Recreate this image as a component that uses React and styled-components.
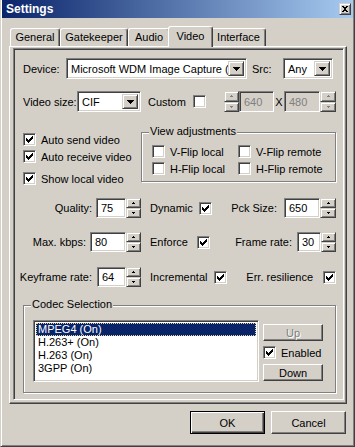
import React from 'react';
import styled, { createGlobalStyle, css } from 'styled-components';

const FACE = '#D4D0C8';
const HI = '#FFFFFF';
const SH = '#808080';
const DK = '#404040';

const GlobalStyle = createGlobalStyle`
  html, body { margin: 0; padding: 0; background: ${FACE}; }
  body { font-family: "Liberation Sans", Arial, sans-serif; font-size: 11px; color: #000; }
  * { box-sizing: border-box; }
`;

const sunken = css`
  border: 1px solid;
  border-color: ${SH} ${HI} ${HI} ${SH};
  box-shadow: inset 1px 1px ${DK}, inset -1px -1px ${FACE};
`;

const raised = css`
  border: 1px solid;
  border-color: ${FACE} ${DK} ${DK} ${FACE};
  box-shadow: inset 1px 1px ${HI}, inset -1px -1px ${SH};
`;

const Window = styled.div`
  width: 355px;
  height: 447px;
  background: ${FACE};
  border-left: 1px solid ${FACE};
  border-right: 1px solid ${DK};
  border-bottom: 1px solid ${DK};
  box-shadow: inset 1px 0 ${HI}, inset -1px -1px ${SH};
  display: flex;
  flex-direction: column;
`;

const TitleBar = styled.div`
  height: 18px;
  margin: 0 1px;
  background: linear-gradient(to right, #0A246A, #A6CAF0);
  display: flex;
  align-items: center;
  justify-content: space-between;
  padding: 0 2px 0 4px;
`;

const TitleText = styled.span`
  color: #fff;
  font-weight: bold;
  font-size: 12px;
`;

const CloseButton = styled.div`
  width: 12px;
  height: 12px;
  background: ${FACE};
  ${raised};
  display: flex;
  align-items: center;
  justify-content: center;
`;

const Body = styled.div`
  flex: 1;
  padding-left: 8px;
  display: flex;
  flex-direction: column;
`;

const TabStrip = styled.div`
  height: 28px;
  display: flex;
  align-items: flex-end;
  padding-left: 1px;
`;

const Tab = styled.div`
  position: relative;
  z-index: ${p => (p.$active ? 2 : 1)};
  width: ${p => p.$w + (p.$active ? 4 : 0)}px;
  height: ${p => (p.$active ? 21 : 18)}px;
  margin: 0 ${p => (p.$active ? -2 : 0)}px ${p => (p.$active ? -1 : 0)}px;
  background: ${FACE};
  border-top: 1px solid ${HI};
  border-left: 1px solid ${HI};
  border-right: 1px solid ${DK};
  border-radius: 3px 3px 0 0;
  box-shadow: inset -1px 0 ${SH};
  display: flex;
  align-items: center;
  justify-content: center;
  padding-bottom: ${p => (p.$active ? 3 : 1)}px;
  white-space: nowrap;
`;

const Panel = styled.div`
  width: 338px;
  height: 358px;
  border: 1px solid;
  border-color: ${HI} ${DK} ${DK} ${HI};
  box-shadow: inset -1px -1px ${SH};
  padding: 1px 0 0 3px;
`;

const Frame = styled.div`
  width: 331px;
  height: 352px;
  ${sunken};
  padding: 0 7px 0 9px;
  display: flex;
  flex-direction: column;
`;

const FieldRow = styled.div`
  display: flex;
  align-items: center;
  height: ${p => p.$h || 20}px;
  margin-top: ${p => p.$mt || 0}px;
`;

const Text = styled.span`
  display: inline-block;
  flex: none;
  white-space: nowrap;
  width: ${p => (p.$w ? `${p.$w}px` : 'auto')};
  margin-left: ${p => p.$ml || 0}px;
  margin-right: ${p => p.$mr || 0}px;
  text-align: ${p => p.$align || 'left'};
  color: ${p => (p.$disabled ? SH : '#000')};
`;

const Combo = styled.div`
  width: ${p => p.$w}px;
  height: 21px;
  flex: none;
  ${sunken};
  background: #fff;
  padding: 2px;
  display: flex;
  align-items: stretch;
`;

const ComboText = styled.div`
  flex: 1;
  min-width: 0;
  overflow: hidden;
  white-space: nowrap;
  padding-left: 2px;
  display: flex;
  align-items: center;
`;

const DropButton = styled.div`
  width: 16px;
  flex: none;
  background: ${FACE};
  ${raised};
  display: flex;
  align-items: center;
  justify-content: center;
`;

const Edit = styled.div`
  width: ${p => p.$w}px;
  height: ${p => p.$h || 20}px;
  flex: none;
  ${sunken};
  background: ${p => (p.$disabled ? FACE : '#fff')};
  color: ${p => (p.$disabled ? SH : '#000')};
  padding-left: 4px;
  display: flex;
  align-items: center;
`;

const SpinBox = styled.div`
  width: ${p => p.$w || 15}px;
  height: ${p => p.$h || 20}px;
  flex: none;
  display: flex;
  flex-direction: column;
`;

const SpinButton = styled.div`
  flex: 1;
  background: ${FACE};
  ${raised};
  display: flex;
  align-items: center;
  justify-content: center;
`;

const CheckBox = styled.span`
  width: 13px;
  height: 13px;
  flex: none;
  ${sunken};
  background: ${p => (p.$disabled ? FACE : '#fff')};
  display: inline-flex;
  align-items: center;
  justify-content: center;
`;

const CheckRow = styled.div`
  display: flex;
  align-items: center;
  height: 13px;
  margin-top: ${p => p.$mt || 0}px;
`;

const Section = styled.div`
  display: flex;
  align-items: flex-start;
  margin-top: ${p => p.$mt || 0}px;
`;

const LeftChecks = styled.div`
  width: 118px;
  flex: none;
  display: flex;
  flex-direction: column;
  padding-top: 7px;
`;

const Group = styled.div`
  position: relative;
  flex: none;
  width: ${p => p.$w}px;
  height: ${p => p.$h}px;
  margin-top: ${p => p.$mt || 0}px;
  border: 1px solid ${SH};
  box-shadow: inset 1px 1px ${HI}, 1px 1px ${HI};
`;

const Caption = styled.span`
  position: absolute;
  top: -8px;
  left: 7px;
  padding: 0 1px;
  line-height: 13px;
  background: ${FACE};
  white-space: nowrap;
`;

const FlipGrid = styled.div`
  display: grid;
  grid-template-columns: 86px auto;
  row-gap: 4px;
  padding: 12px 0 0 10px;
`;

const LeftCell = styled.div`
  width: 118px;
  flex: none;
  display: flex;
  justify-content: flex-end;
  align-items: center;
  height: 100%;
`;

const MidCell = styled.div`
  margin-left: 9px;
  display: flex;
  align-items: center;
  flex: none;
`;

const RightCell = styled.div`
  flex: 1;
  display: flex;
  justify-content: flex-end;
  align-items: center;
`;

const CodecBody = styled.div`
  display: flex;
  align-items: flex-start;
  padding: 14px 0 0 9px;
`;

const ListBox = styled.div`
  width: 226px;
  height: 62px;
  flex: none;
  ${sunken};
  background: #fff;
  padding: 2px;
`;

const ListItem = styled.div`
  height: 13px;
  line-height: 13px;
  padding-left: 2px;
  white-space: nowrap;
  background: ${p => (p.$selected ? '#0A246A' : 'transparent')};
  color: ${p => (p.$selected ? '#fff' : '#000')};
  outline: ${p => (p.$selected ? '1px dotted #E8D898' : 'none')};
  outline-offset: -1px;
`;

const SideColumn = styled.div`
  margin-left: 4px;
  margin-top: 4px;
  width: 60px;
  display: flex;
  flex-direction: column;
`;

const SmallButton = styled.div`
  width: 60px;
  height: 17px;
  margin-top: ${p => p.$mt || 0}px;
  background: ${FACE};
  border: 1px solid;
  border-color: ${HI} ${DK} ${DK} ${HI};
  box-shadow: inset -1px -1px ${SH};
  display: flex;
  align-items: center;
  justify-content: center;
  color: ${p => (p.$disabled ? SH : '#000')};
  text-shadow: ${p => (p.$disabled ? `1px 1px 0 ${HI}` : 'none')};
`;

const ButtonRow = styled.div`
  width: 338px;
  height: 23px;
  margin-top: 7px;
  padding-right: 1px;
  display: flex;
  justify-content: flex-end;
  gap: 6px;
`;

const DialogButton = styled.div`
  width: 75px;
  height: 23px;
  background: ${FACE};
  border: 1px solid;
  border-color: ${HI} ${DK} ${DK} ${HI};
  box-shadow: inset -1px -1px ${SH};
  display: flex;
  align-items: center;
  justify-content: center;
  ${p =>
    p.$default &&
    css`
      border: 1px solid #000;
      box-shadow: inset 1px 1px ${HI}, inset -1px -1px ${DK}, inset -2px -2px ${SH};
    `}
`;

const CHECK_PATH = 'M0 2h1v1h1v1h1v-1h1v-1h1v-1h1v-1h1v3h-1v1h-1v1h-1v1h-1v1h-1v-1h-1v-1h-1v-1h-1z';

function Check({ checked, disabled }) {
  return (
    <CheckBox $disabled={disabled}>
      {checked && (
        <svg width="7" height="7" viewBox="0 0 7 7" shapeRendering="crispEdges">
          <path d={CHECK_PATH} fill="#000" />
        </svg>
      )}
    </CheckBox>
  );
}

function DownArrow() {
  return (
    <svg width="7" height="4" viewBox="0 0 7 4" shapeRendering="crispEdges">
      <path d="M0 0h7v1h-1v1h-1v1h-1v1h-1v-1h-1v-1h-1v-1h-1z" fill="#000" />
    </svg>
  );
}

function Spinner({ disabled, w, h }) {
  const color = disabled ? SH : '#000';
  return (
    <SpinBox $w={w} $h={h}>
      <SpinButton>
        <svg width="3" height="2" viewBox="0 0 3 2" shapeRendering="crispEdges">
          <path d="M1 0h1v1h1v1h-3v-1h1z" fill={color} />
        </svg>
      </SpinButton>
      <SpinButton>
        <svg width="3" height="2" viewBox="0 0 3 2" shapeRendering="crispEdges">
          <path d="M0 0h3v1h-1v1h-1v-1h-1z" fill={color} />
        </svg>
      </SpinButton>
    </SpinBox>
  );
}

function ComboBox({ w, value }) {
  return (
    <Combo $w={w}>
      <ComboText>{value}</ComboText>
      <DropButton>
        <DownArrow />
      </DropButton>
    </Combo>
  );
}

export default function App() {
  return (
    <>
      <GlobalStyle />
      <Window>
        <TitleBar>
          <TitleText>Settings</TitleText>
          <CloseButton>
            <svg width="6" height="6" viewBox="0 0 6 6" shapeRendering="crispEdges">
              <path d="M0 0h2v1h2v-1h2v1h-1v1h-1v2h1v1h1v1h-2v-1h-2v1h-2v-1h1v-1h1v-2h-1v-1h-1z" fill="#000" />
            </svg>
          </CloseButton>
        </TitleBar>
        <Body>
          <TabStrip>
            <Tab $w={50}>General</Tab>
            <Tab $w={68}>Gatekeeper</Tab>
            <Tab $w={42}>Audio</Tab>
            <Tab $w={41} $active>Video</Tab>
            <Tab $w={55}>Interface</Tab>
          </TabStrip>
          <Panel>
            <Frame>
              <FieldRow $h={21} $mt={9}>
                <Text $w={43}>Device:</Text>
                <ComboBox w={181} value="Microsoft WDM Image Capture (W" />
                <Text $w={31} $ml={5}>Src:</Text>
                <ComboBox w={50} value="Any" />
              </FieldRow>

              <FieldRow $h={21} $mt={12}>
                <Text $w={54}>Video size:</Text>
                <ComboBox w={64} value="CIF" />
                <Text $w={45} $ml={7}>Custom</Text>
                <Check />
                <Text $w={18} />
                <Spinner disabled h={21} />
                <Edit $w={35} $h={21} $disabled>640</Edit>
                <Text $w={10} $align="center">X</Text>
                <Edit $w={36} $h={21} $disabled>480</Edit>
                <Spinner disabled w={16} h={21} />
              </FieldRow>

              <Section $mt={14}>
                <LeftChecks>
                  <CheckRow>
                    <Check checked />
                    <Text $ml={5}>Auto send video</Text>
                  </CheckRow>
                  <CheckRow $mt={4}>
                    <Check checked />
                    <Text $ml={5}>Auto receive video</Text>
                  </CheckRow>
                  <CheckRow $mt={9}>
                    <Check checked />
                    <Text $ml={5}>Show local video</Text>
                  </CheckRow>
                </LeftChecks>
                <Group $w={195} $h={50} $mt={6}>
                  <Caption>View adjustments</Caption>
                  <FlipGrid>
                    <CheckRow>
                      <Check />
                      <Text $ml={5}>V-Flip local</Text>
                    </CheckRow>
                    <CheckRow>
                      <Check />
                      <Text $ml={5}>V-Flip remote</Text>
                    </CheckRow>
                    <CheckRow>
                      <Check />
                      <Text $ml={5}>H-Flip local</Text>
                    </CheckRow>
                    <CheckRow>
                      <Check />
                      <Text $ml={5}>H-Flip remote</Text>
                    </CheckRow>
                  </FlipGrid>
                </Group>
              </Section>

              <FieldRow $mt={13}>
                <LeftCell>
                  <Text $mr={4}>Quality:</Text>
                  <Edit $w={30}>75</Edit>
                  <Spinner />
                </LeftCell>
                <MidCell>
                  <Text $w={49}>Dynamic</Text>
                  <Check checked />
                </MidCell>
                <RightCell>
                  <Text $mr={7}>Pck Size:</Text>
                  <Edit $w={36}>650</Edit>
                  <Spinner w={16} />
                </RightCell>
              </FieldRow>

              <FieldRow $mt={14}>
                <LeftCell>
                  <Text $mr={4}>Max. kbps:</Text>
                  <Edit $w={36}>80</Edit>
                  <Spinner />
                </LeftCell>
                <MidCell>
                  <Text $w={47}>Enforce</Text>
                  <Check checked />
                </MidCell>
                <RightCell>
                  <Text $mr={5}>Frame rate:</Text>
                  <Edit $w={24}>30</Edit>
                  <Spinner />
                </RightCell>
              </FieldRow>

              <FieldRow $mt={15}>
                <LeftCell>
                  <Text $mr={5}>Keyframe rate:</Text>
                  <Edit $w={29}>64</Edit>
                  <Spinner />
                </LeftCell>
                <MidCell>
                  <Text $w={64}>Incremental</Text>
                  <Check checked />
                </MidCell>
                <RightCell>
                  <Text $mr={10}>Err. resilience</Text>
                  <Check checked />
                </RightCell>
              </FieldRow>

              <Group $w={313} $h={88} $mt={18}>
                <Caption>Codec Selection</Caption>
                <CodecBody>
                  <ListBox>
                    <ListItem $selected>MPEG4 (On)</ListItem>
                    <ListItem>H.263+ (On)</ListItem>
                    <ListItem>H.263 (On)</ListItem>
                    <ListItem>3GPP (On)</ListItem>
                  </ListBox>
                  <SideColumn>
                    <SmallButton $disabled>Up</SmallButton>
                    <CheckRow $mt={5}>
                      <Check checked />
                      <Text $ml={5}>Enabled</Text>
                    </CheckRow>
                    <SmallButton $mt={5}>Down</SmallButton>
                  </SideColumn>
                </CodecBody>
              </Group>
            </Frame>
          </Panel>
          <ButtonRow>
            <DialogButton $default>OK</DialogButton>
            <DialogButton>Cancel</DialogButton>
          </ButtonRow>
        </Body>
      </Window>
    </>
  );
}
